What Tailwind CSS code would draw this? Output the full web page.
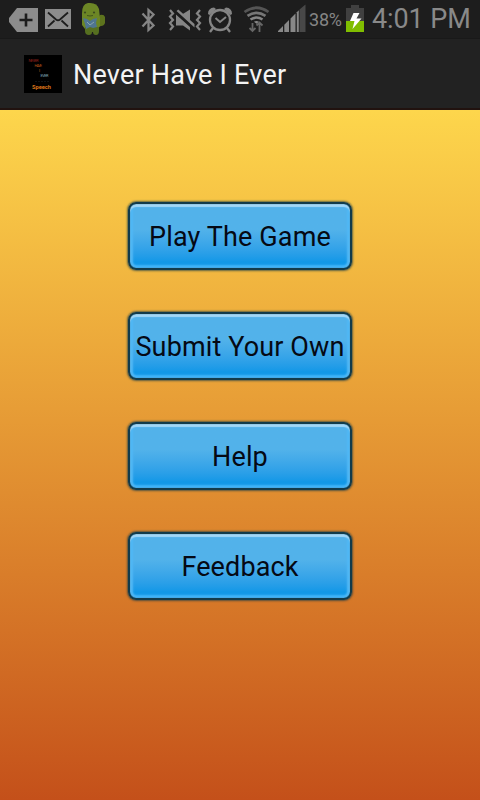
<!DOCTYPE html>
<html lang="en">

<head>
  <meta charset="UTF-8" />
  <meta name="viewport" content="width=device-width, initial-scale=1.0" />
  <title>Never Have I Ever</title>
  <script src="https://cdn.jsdelivr.net/npm/@tailwindcss/browser@4"></script>
</head>

<body class="h-screen overflow-hidden flex flex-col bg-[#222] font-['Roboto','Liberation_Sans',sans-serif]">

  <!-- Status bar -->
  <div class="h-[38px] shrink-0 flex items-start bg-[#1d1d1d] text-[#8b8b8b]">
    <svg class="ml-2 w-[30px] h-[38px] shrink-0" viewBox="8 0 30 38">
      <path d="M17 8h21v24H17l-8-10v-4z" fill="#8c8c8c" />
      <path d="M26 13.500v13M19.500 20h13" stroke="#1d1d1d" stroke-width="2.600" />
    </svg>
    <svg class="ml-[7px] w-[26px] h-[38px] shrink-0" viewBox="45 0 26 38">
      <path d="M45 9h26v20H45z" fill="#8c8c8c" />
      <path d="M48 12.500l8 7q2 1.500 4 0l8-7M48 26.500l6.500-6M68 26.500l-6.500-6" fill="none" stroke="#1d1d1d" stroke-width="1.800" />
    </svg>
    <svg class="ml-2.5 w-[24px] h-[38px] shrink-0" viewBox="81 0 24 38">
      <path d="M99 17l1-2q4-1 5 2v6q-1 3-4 3l-3 1z" fill="#5d731d" />
      <path d="M82 13q0-9 6-10 9-1 11 6l1 9v8l-2 3H85l-3-4z" fill="#6c8625" />
      <path d="M85 27h14v4q0 4-3 4-3 0-3-3h-1q0 3-3 3-4 0-4-4z" fill="#566f20" />
      <path d="M83 18l4 1 3 2 3-2 4-1-1 5 1 4-4 1-3-1-4 2-1-5z" fill="#4f7590" />
      <path d="M87 22l3 3 4-3" fill="none" stroke="#8aa4ae" />
      <circle cx="85" cy="12.500" r="1.100" fill="#3c4921" />
      <circle cx="94" cy="12.500" r="1.100" fill="#3c4921" />
      <path d="M87 15.500q3 1 6 0" fill="none" stroke="#43541d" />
    </svg>
    <svg class="ml-9 w-[15px] h-[38px] shrink-0" viewBox="141 0 15 38">
      <path d="M142.500 13.500l11 12-5 4.500V10l5 4.500-11 12" fill="none" stroke="#858585" stroke-width="2.300" />
    </svg>
    <svg class="ml-3 w-[34px] h-[38px] shrink-0" viewBox="168 0 34 38">
      <path d="M170 10l3 3.500-3 3 3 3.500-3 3 3 3.500-3 3.500M200 10l-3 3.500 3 3-3 3.500 3 3-3 3.500 3 3.500" fill="none" stroke="#858585" stroke-width="2.200" />
      <path d="M176 14.500L190 27v3.500l-7-5h-7zM182 14.500l8-5v11.500zM176.500 11l1.800-1.500 16.200 14.500v3.500z" fill="#858585" />
      <path d="M176 13l18 16" stroke="#1d1d1d" stroke-width="1.200" />
    </svg>
    <svg class="ml-1 w-[28px] h-[38px] shrink-0" viewBox="206 0 28 38">
      <circle cx="220" cy="20" r="10" fill="none" stroke="#858585" stroke-width="2.300" />
      <path d="M215.500 18l4.500 4 6-5" fill="none" stroke="#858585" stroke-width="2" />
      <path d="M208 14q0-6 6-6.500l2 1.500-6.500 6zM232 14q0-6-6-6.500l-2 1.500 6.500 6z" fill="#858585" />
      <path d="M213 28l-3 4M227 28l3 4" stroke="#858585" stroke-width="2.300" />
    </svg>
    <svg class="ml-2 w-[30px] h-[38px] shrink-0" viewBox="242 0 30 38">
      <g fill="none" stroke-width="2.700">
        <path d="M244.500 12q12-8.500 24 0" stroke="#555" />
        <path d="M247.500 15.800q9-6 18 0" stroke="#777" />
        <path d="M250.500 19.500q6-4 12 0" stroke="#858585" />
      </g>
      <path d="M254 21.800q2.500-1.500 5 0l-2.500 2z" fill="#888" />
      <path d="M252.500 23v8M249.500 28l3 3 3-3M259.500 32v-9M256.500 25.500l3-3 3 3" fill="none" stroke="#666" stroke-width="1.800" />
    </svg>
    <svg class="ml-1.5 w-[28px] h-[38px] shrink-0" viewBox="278 0 28 38">
      <path d="M278 32v-1l5-5v6zM284.300 32v-7.300l4.700-4.700v12zM290.500 32V18.500l5-5V32z" fill="#888" />
      <path d="M296.800 32V12.200l2-2V32z" fill="#888" />
      <path d="M299.500 32V9.500l6-5V32z" fill="#484848" />
    </svg>
    <span class="ml-[3px] w-[37px] h-[38px] leading-[40px] text-[18px] tracking-[-0.2px] whitespace-nowrap text-[#858585]">38%</span>
    <svg class="w-[18px] h-[38px] shrink-0" viewBox="346 0 18 38">
      <path d="M351 5h8v3h5v13h-18V8h5z" fill="#404040" />
      <path d="M346 21h18v11h-18z" fill="#80bd00" />
      <path d="M353.500 13h6l-3 5.500h5l-9 10.500 2-8h-4.500z" fill="#fff" />
    </svg>
    <span class="ml-2 h-[38px] leading-[38px] text-[27px] tracking-[-0.1px] whitespace-nowrap text-[#898989]">4:01 PM</span>
  </div>

  <!-- Action bar -->
  <div class="h-[72px] shrink-0 flex items-center border-t border-[#191919] border-b-2 border-b-[#21120f] bg-[#222] pl-6">
    <svg class="w-[38px] h-[38px] shrink-0" viewBox="0 0 38 38" font-family="Roboto, sans-serif">
      <rect width="38" height="38" fill="#000" />
      <text x="4.500" y="6.500" font-size="4" fill="#8f211c" textLength="10">NEVER</text>
      <text x="10.500" y="11.500" font-size="4" fill="#b25118" textLength="7.500">HAVE</text>
      <text x="15" y="16.500" font-size="4" fill="#b66820">I</text>
      <text x="16.500" y="22" font-size="4" fill="#7fa5b5" textLength="8">EVER</text>
      <path d="M11 26.500h15" stroke="#151b20" stroke-width=".7" stroke-dasharray="2 1" />
      <text x="8" y="34" font-size="6" font-weight="700" fill="#db7419" textLength="19" lengthAdjust="spacingAndGlyphs">Speech</text>
    </svg>
    <h1 class="ml-[11px] pt-0.5 text-[27px] leading-[36px] tracking-[0.22px] text-[#f3f3f3] whitespace-nowrap">Never Have I Ever</h1>
  </div>

  <!-- Menu -->
  <main class="flex-1 flex flex-col items-center gap-[42px] pt-[92px] bg-linear-to-b from-[#fdd64c] to-[#c4501a] text-[27px] text-[#050914]">
    <button class="w-[224px] h-[68px] pt-0.5 shrink-0 rounded-[8px] border-2 border-[#123b4b] bg-linear-to-b from-[#52b2ea] from-40% to-[#1298e7] to-90% shadow-[0_0_2px_1px_#153947aa,inset_0_0_1px_#17475c,inset_0_3px_1px_#a2d7f8,inset_3px_0_2px_#50b8f5,inset_-3px_0_2px_#50b8f5,inset_0_-3px_2px_#41b3f8] whitespace-nowrap tracking-[0.13px]">Play The Game</button>
    <button class="w-[224px] h-[68px] pt-0.5 shrink-0 rounded-[8px] border-2 border-[#123b4b] bg-linear-to-b from-[#52b2ea] from-40% to-[#1298e7] to-90% shadow-[0_0_2px_1px_#153947aa,inset_0_0_1px_#17475c,inset_0_3px_1px_#a2d7f8,inset_3px_0_2px_#50b8f5,inset_-3px_0_2px_#50b8f5,inset_0_-3px_2px_#41b3f8] whitespace-nowrap tracking-[0.13px]">Submit Your Own</button>
    <button class="w-[224px] h-[68px] pt-0.5 shrink-0 rounded-[8px] border-2 border-[#123b4b] bg-linear-to-b from-[#52b2ea] from-40% to-[#1298e7] to-90% shadow-[0_0_2px_1px_#153947aa,inset_0_0_1px_#17475c,inset_0_3px_1px_#a2d7f8,inset_3px_0_2px_#50b8f5,inset_-3px_0_2px_#50b8f5,inset_0_-3px_2px_#41b3f8] whitespace-nowrap tracking-[0.13px]">Help</button>
    <button class="w-[224px] h-[68px] pt-0.5 shrink-0 rounded-[8px] border-2 border-[#123b4b] bg-linear-to-b from-[#52b2ea] from-40% to-[#1298e7] to-90% shadow-[0_0_2px_1px_#153947aa,inset_0_0_1px_#17475c,inset_0_3px_1px_#a2d7f8,inset_3px_0_2px_#50b8f5,inset_-3px_0_2px_#50b8f5,inset_0_-3px_2px_#41b3f8] whitespace-nowrap tracking-[0.13px]">Feedback</button>
  </main>
</body>

</html>
